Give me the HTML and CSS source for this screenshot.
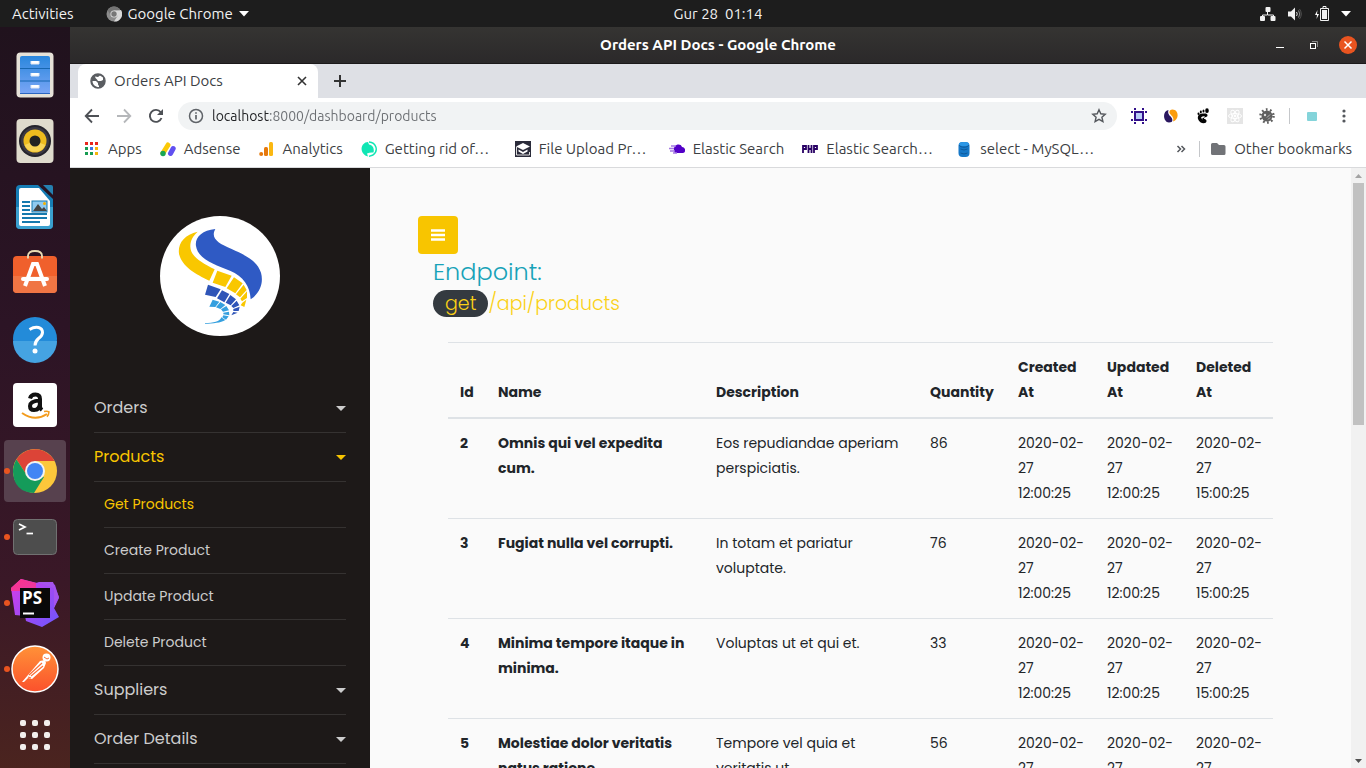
FILE: index.html
```html
<!DOCTYPE html>
<html lang="en">
<head>
<meta charset="utf-8">
<meta name="viewport" content="width=device-width, initial-scale=1">
<title>Orders API Docs</title>
<link rel="stylesheet" href="styles.css">
</head>
<body>
<header class="topbar">
  <div class="topbar-left">
    <button class="topbar-btn">Activities</button>
    <button class="topbar-btn app-menu">
      <svg width="16" height="16" viewBox="0 0 16 16"><circle cx="8" cy="8" r="7.5" fill="#8c8c8c"/><path d="M8 4h7a7.5 7.5 0 0 1-7 11.500L11.500 10z" fill="#d8d8d8"/><path d="M1.500 4.300A7.500 7.500 0 0 1 14.500 4.300L8 4.500 4.500 9z" fill="#747474"/><circle cx="8" cy="8" r="3.600" fill="#ddd"/><circle cx="8" cy="8" r="2.700" fill="#777"/></svg>
      <span>Google Chrome</span>
      <svg width="10" height="6" viewBox="0 0 10 6"><path d="M0 0h10L5 5.500z" fill="#fff"/></svg>
    </button>
  </div>
  <button class="topbar-btn clock">Gur 28&nbsp; 01:14</button>
  <div class="topbar-right">
    <svg width="16" height="14" viewBox="0 0 16 14" fill="#f2f2f2"><rect x="5.500" y="0" width="5" height="5" rx="1"/><path d="M7.500 5v3H2.500v2M8 8h5.500v2" fill="none" stroke="#f2f2f2"/><rect x="0" y="9" width="5" height="5" rx="1"/><rect x="10.500" y="9" width="5" height="5" rx="1"/></svg>
    <svg width="16" height="14" viewBox="0 0 16 14"><path d="M1 4.500h3l4-4v13l-4-4H1z" fill="#f2f2f2"/><path d="M9.500 5q1.500 2 0 4" fill="none" stroke="#ddd"/><path d="M11.500 3.500q2.500 3.500 0 7" fill="none" stroke="#888"/><path d="M12.500 2q3.500 5 0 10" fill="none" stroke="#555"/></svg>
    <svg width="16" height="16" viewBox="0 0 16 16"><path d="M3.500 4L1 9h2l-.500 4L5 8H3z" fill="#fff"/><path d="M6.500 2.500h8v12h-8zM9 2V.500h3V2" fill="none" stroke="#f2f2f2"/><rect x="8" y="4" width="5" height="9" fill="#f2f2f2"/></svg>
    <svg width="10" height="6" viewBox="0 0 10 6"><path d="M0 0h10L5 5.500z" fill="#fff"/></svg>
  </div>
</header>
<div class="desktop">
  <nav class="dock" aria-label="Dock">
    <button class="dock-item" aria-label="Files"><svg viewBox="0 0 48 48"><defs><linearGradient id="fl" x2="0" y2="1"><stop offset="0" stop-color="#2a87dd"/><stop offset="1" stop-color="#7ba6f6"/></linearGradient></defs><rect x="5.500" y="1.500" width="37" height="45" rx="4" fill="#e6e2d8"/><rect x="9" y="5" width="30" height="38" rx="2" fill="url(#fl)"/><path d="M9 17.500h30M9 30h30" stroke="#1767b0"/><path d="M9 42.500h30" stroke="#2a65c0"/><path d="M20 10v3h8v-3M20 22v3h8v-3M20 34v3h8v-3" fill="#fff" stroke="#dfe7f4"/></svg></button>
    <button class="dock-item" aria-label="Rhythmbox"><svg viewBox="0 0 48 48"><rect x="5.500" y="2" width="37" height="44" rx="4" fill="#dfdbcd"/><circle cx="24" cy="24" r="16" fill="#24232b"/><circle cx="24" cy="24" r="14" fill="#3a3842"/><circle cx="24" cy="24" r="11.500" fill="#edbb1e"/><path d="M13.500 28a11.500 11.500 0 0 0 21 0L24 24z" fill="#f8d456"/><circle cx="24" cy="24" r="5.500" fill="#222"/></svg></button>
    <button class="dock-item" aria-label="LibreOffice Writer"><svg viewBox="0 0 48 48"><path d="M9 2h18l15 14v26a4 4 0 0 1-4 4H9a4 4 0 0 1-4-4V6a4 4 0 0 1 4-4z" fill="#167db5"/><path d="M5 24h37v18a4 4 0 0 1-4 4H9a4 4 0 0 1-4-4z" fill="#3aa0cf"/><path d="M10 5h18l11 13v23a2 2 0 0 1-2 2H10a2 2 0 0 1-2-2V7a2 2 0 0 1 2-2z" fill="#fff"/><path d="M32 2h8a2 2 0 0 1 2 2v8z" fill="#2581b1"/><path d="M11 19h8M11 23h8M11 27h8M11 31h25M11 35h25M11 39h18" stroke="#1679ad" stroke-width="2"/><rect x="21" y="18" width="15" height="11" fill="#8fcaf0" stroke="#1679ad"/><path d="M22 28l5-7 4 5 2-2 3 4z" fill="#444"/><circle cx="33.500" cy="20.500" r="1.500" fill="#f4b000"/></svg></button>
    <button class="dock-item" aria-label="Ubuntu Software"><svg viewBox="0 0 48 48"><rect x="2" y="7" width="44" height="37" rx="4" fill="#f0602c"/><path d="M2 27h44v13a4 4 0 0 1-4 4H6a4 4 0 0 1-4-4z" fill="#f07544"/><path d="M14 37l8-22h4l8 22" fill="none" stroke="#fff" stroke-width="4"/><rect x="10" y="28" width="28" height="4" rx="2" fill="#fff"/><path d="M17 9.500V7q0-5 7-5t7 5v2.500" fill="none" stroke="#e9dcb4" stroke-width="1.800"/></svg></button>
    <button class="dock-item" aria-label="Help"><svg viewBox="0 0 48 48"><circle cx="24" cy="24" r="22" fill="#238bd9"/><path d="M2 26a22 22 0 0 0 44 0z" fill="#45a3e2"/><path d="M18.500 14.500q5-3 9-2 4 1.200 4 5 0 3-4 6-3.500 3-3.500 7" fill="none" stroke="#fff" stroke-width="3"/><circle cx="24" cy="36" r="2.500" fill="#fff"/></svg></button>
    <button class="dock-item" aria-label="Amazon"><svg viewBox="0 0 48 48"><rect x="2" y="2" width="44" height="44" rx="4" fill="#fff"/><path d="M19 17.500q1-4 5.500-4 4.500 0 4.500 4.500v7.500q0 2 2 3.500M29 19.500q-10 .500-10 5.500 0 4 4 4 6 0 6-8" fill="none" stroke="#111" stroke-width="4"/><path d="M11 32q13 9 25 1" fill="none" stroke="#f29b1d" stroke-width="2"/><path d="M33 30.500q3-.800 5 .300 0 2.500-2 5" fill="none" stroke="#f29b1d" stroke-width="1.500"/></svg></button>
    <button class="dock-item active" aria-label="Google Chrome"><svg viewBox="0 0 48 48"><circle cx="24" cy="24" r="22" fill="#fcc73b"/><path d="M5.500 12.500A22 22 0 0 1 43.500 14H24l-9 13z" fill="#dc4437"/><path d="M5.500 12.500A22 22 0 0 0 2 25q1 20 21 21l10-16-18-3z" fill="#149b5a"/><circle cx="24" cy="24" r="10" fill="#f3f3f3"/><circle cx="24" cy="24" r="8" fill="#4285f4"/></svg></button>
    <button class="dock-item running" aria-label="Terminal"><svg viewBox="0 0 48 48"><rect x="2.500" y="6.500" width="43" height="35" rx="4" fill="#4d4d4d" stroke="#717171"/><path d="M8 11l6 3-6 3" fill="none" stroke="#fff" stroke-width="1.700"/><path d="M15.500 20.500H22" stroke="#fff" stroke-width="1.700"/></svg></button>
    <button class="dock-item running" aria-label="PhpStorm"><svg viewBox="0 0 48 48"><defs><linearGradient id="ps" y2="1"><stop offset="0" stop-color="#d83ce8"/><stop offset="1" stop-color="#6b57ff"/></linearGradient><linearGradient id="pk" x2="1" y2="1"><stop offset="0" stop-color="#ff318c"/><stop offset="1" stop-color="#e83aa3"/></linearGradient></defs><path d="M0 9L10 0l16 4 14-1 4 3 4 13-5 10 5 9-17 10-16-6-1-5-10-1z" fill="url(#ps)"/><path d="M0 9L10 0l15 4 0 8H0z" fill="url(#pk)"/><path d="M25 3h17l6 15-5 11V9z" fill="#a653ed"/><rect x="9" y="9" width="30" height="30" fill="#090909"/><text x="11" y="25" class="ps-text">PS</text><path d="M12 34.500h11" stroke="#fff" stroke-width="2"/></svg></button>
    <button class="dock-item running" aria-label="Postman"><svg viewBox="0 0 48 48"><defs><linearGradient id="pm" x2="0" y2="1"><stop offset="0" stop-color="#ff9238"/><stop offset="1" stop-color="#fb512c"/></linearGradient></defs><circle cx="24" cy="24" r="23" fill="url(#pm)" stroke="#fff" stroke-width="1.500"/><path d="M11 37l6-7L29 16l5-1 1 3-2 5-12 11-4-1-4 4z" fill="#fff"/><path d="M18 30L31 18M20 31L32 21M17 32l3 1" stroke="#fb6f37" stroke-width="1.200"/><circle cx="35.500" cy="12.500" r="4" fill="#fff"/><path d="M33 12l3 2 2-1" fill="none" stroke="#fa713c"/></svg></button>
    <button class="dock-item" aria-label="Show Applications"><svg viewBox="0 0 48 48" fill="#f2eeec"><rect x="9" y="9" width="6" height="6" rx="2"/><rect x="21" y="9" width="6" height="6" rx="2"/><rect x="33" y="9" width="6" height="6" rx="2"/><rect x="9" y="21" width="6" height="6" rx="2"/><rect x="21" y="21" width="6" height="6" rx="2"/><rect x="33" y="21" width="6" height="6" rx="2"/><rect x="9" y="33" width="6" height="6" rx="2"/><rect x="21" y="33" width="6" height="6" rx="2"/><rect x="33" y="33" width="6" height="6" rx="2"/></svg></button>
  </nav>
  <div class="window">
    <div class="titlebar">
      <span class="window-title">Orders API Docs - Google Chrome</span>
      <div class="window-controls">
        <button aria-label="Minimize"><svg width="18" height="18" viewBox="0 0 18 18"><path d="M5 11.500h8" stroke="#fff"/></svg></button>
        <button aria-label="Restore"><svg width="18" height="18" viewBox="0 0 18 18"><path d="M7 5.500h5.500V11" fill="none" stroke="#888"/><rect x="5.500" y="7.500" width="5" height="5" fill="none" stroke="#fff"/></svg></button>
        <button aria-label="Close"><svg width="18" height="18" viewBox="0 0 18 18"><circle cx="9" cy="9" r="9" fill="#e95420"/><path d="M5.500 5.500l7 7M12.500 5.500l-7 7" stroke="#fff" stroke-width="1.500"/></svg></button>
      </div>
    </div>
    <div class="tabstrip">
      <div class="tab">
        <svg width="16" height="16" viewBox="0 0 16 16"><circle cx="8" cy="8" r="7" fill="#5a5d61"/><path d="M2.500 8h3.500l2 2v1.500l1 1.500v1.500l-3-1Q2.500 11.500 2.500 8zM5 3.500l3 .500 2-1.500 3 2v2.500l-2 1h-3l-1-1.500L5.500 5z" fill="#fff"/><circle cx="8" cy="8" r="7" fill="none" stroke="#5a5d61" stroke-width="1.500"/></svg>
        <span class="tab-title">Orders API Docs</span>
        <button class="icon-btn" aria-label="Close tab"><svg width="16" height="16" viewBox="0 0 16 16"><path d="M4 4l8 8M12 4l-8 8" stroke="#333" stroke-width="1.600"/></svg></button>
      </div>
      <button class="icon-btn" aria-label="New tab"><svg width="16" height="16" viewBox="0 0 16 16"><path d="M8 2v12M2 8h12" stroke="#333" stroke-width="2"/></svg></button>
    </div>
    <div class="toolbar">
      <div class="nav-buttons">
        <button class="icon-btn" aria-label="Back"><svg width="16" height="16" viewBox="0 0 16 16"><path d="M15 8H2M8 1.500L1.700 8 8 14.500" fill="none" stroke="#4e5156" stroke-width="1.800"/></svg></button>
        <button class="icon-btn" aria-label="Forward"><svg width="16" height="16" viewBox="0 0 16 16"><path d="M1 8h13M8 1.500L14.300 8 8 14.500" fill="none" stroke="#b5b7ba" stroke-width="1.800"/></svg></button>
        <button class="icon-btn" aria-label="Reload"><svg width="16" height="16" viewBox="0 0 16 16"><path d="M13.500 10A6 6 0 1 1 12.700 4.300" fill="none" stroke="#4e5156" stroke-width="1.900"/><path d="M15 1v6H9z" fill="#4e5156"/></svg></button>
      </div>
      <div class="omnibox">
        <svg width="16" height="16" viewBox="0 0 16 16"><circle cx="8" cy="8" r="6.500" fill="none" stroke="#5f6368" stroke-width="1.500"/><path d="M8 7v4.500M8 4.200v1.600" stroke="#5f6368" stroke-width="1.700"/></svg>
        <input class="url" type="text" aria-label="Address" value="localhost:8000/dashboard/products">
        <button class="icon-btn" aria-label="Bookmark"><svg width="16" height="16" viewBox="0 0 16 16"><path d="M8 1.800l1.800 4 4.400.400-3.300 3 1 4.400L8 11.300l-3.900 2.300 1-4.400-3.300-3 4.400-.400z" fill="none" stroke="#55585d" stroke-width="1.400"/></svg></button>
      </div>
      <div class="extensions">
        <button class="icon-btn" aria-label="Frame extension"><svg width="16" height="16" viewBox="0 0 16 16"><rect x="4" y="4" width="8" height="8" fill="#b9cdf7" stroke="#32108a" stroke-width="2"/><path d="M0 4h2M14 4h2M0 12h2M14 12h2M4 0v2M12 0v2M4 14v2M12 14v2" stroke="#32108a" stroke-width="2"/></svg></button>
        <button class="icon-btn" aria-label="Similar sites"><svg width="16" height="16" viewBox="0 0 16 16"><path d="M5.500 2C-1 3 0 14 6 14.500q4.500 0 3-4C8 8 4 7 5.500 2z" fill="#2a175f"/><path d="M10 13.500C16.500 12 16 1.500 9.500 1.500Q6 1.500 6.500 5C8 8 11.500 8.500 10 13.500z" fill="#fb9d0e"/></svg></button>
        <button class="icon-btn" aria-label="GNOME Shell integration"><svg width="16" height="16" viewBox="0 0 16 16"><path d="M9.500 5.500C5 5 2 7 3 11c1.500 5 8.500 5.500 8.500 2 0-2-3-1.500-2.500-3 .500-1 3.500-1 3.500-2.500s-1-2-3-2z" fill="#050505"/><path d="M6 9.500q2-2 4-1-.500 1-2 1.500t-.500 2z" fill="#fff"/><ellipse cx="12" cy="2.700" rx="1.800" ry="2.400"/><ellipse cx="8.500" cy="3" rx="1" ry="1.600"/><ellipse cx="5.800" cy="4" rx="1" ry="1.400"/><ellipse cx="3.500" cy="5.700" rx="1" ry="1.200"/></svg></button>
        <button class="icon-btn" aria-label="React tools"><svg width="16" height="16" viewBox="0 0 16 16"><path d="M0 0h16v16H0z" fill="#e5e5e5"/><g fill="none" stroke="#fff"><ellipse cx="8" cy="8" rx="6.500" ry="2.500"/><ellipse cx="8" cy="8" rx="6.500" ry="2.500" transform="rotate(60 8 8)"/><ellipse cx="8" cy="8" rx="6.500" ry="2.500" transform="rotate(120 8 8)"/></g><circle cx="8" cy="8" r="1.400" fill="#fff"/></svg></button>
        <button class="icon-btn" aria-label="Bug tool"><svg width="16" height="16" viewBox="0 0 16 16"><circle cx="8" cy="8" r="6.500" fill="none" stroke="#5f5f5f" stroke-width="2.500" stroke-dasharray="1.700 2.400"/><circle cx="8" cy="8" r="5.500" fill="#5f5f5f"/><circle cx="6" cy="7" r="1.200" fill="#ddd"/><path d="M8 9.500l3-3M9 11.500l2-2" stroke="#bbb"/></svg></button>
        <span class="divider"></span>
        <button class="icon-btn" aria-label="Profile"><svg width="16" height="16" viewBox="0 0 16 16"><rect x="3" y="4" width="10" height="9" rx="1" fill="#84d4da"/></svg></button>
        <button class="icon-btn" aria-label="Menu"><svg width="16" height="16" viewBox="0 0 16 16" fill="#55585d"><circle cx="8" cy="3" r="1.600"/><circle cx="8" cy="8" r="1.600"/><circle cx="8" cy="13" r="1.600"/></svg></button>
      </div>
    </div>
    <nav class="bookmarks" aria-label="Bookmarks">
      <a class="bookmark" href="#"><svg width="16" height="16" viewBox="0 0 16 16"><path d="M1 1h3v3H1zM6 1h3v3H6zM11 1h3v3h-3z" fill="#e8261c"/><path d="M1 6h3v3H1z" fill="#179c52"/><path d="M6 6h3v3H6z" fill="#3c75e8"/><path d="M11 6h3v3h-3z" fill="#f5b50b"/><path d="M1 11h3v3H1zM6 11h3v3H6z" fill="#179c52"/><path d="M11 11h3v3h-3z" fill="#f5b50b"/></svg>Apps</a>
      <a class="bookmark" href="#"><svg width="16" height="16" viewBox="0 0 16 16" fill="none" stroke-linecap="round"><path d="M8 4L3 12" stroke="#fbc908" stroke-width="5"/><circle cx="3" cy="12.500" r="2.700" fill="#18a655"/><path d="M13.200 7.500L10.500 12.500" stroke="#6150f0" stroke-width="5"/></svg>Adsense</a>
      <a class="bookmark" href="#"><svg width="16" height="16" viewBox="0 0 16 16"><rect x="11" y="1" width="4" height="14" rx="1.500" fill="#fbb811"/><rect x="6" y="6" width="4" height="9" rx="1.500" fill="#e6790c"/><circle cx="3.200" cy="13" r="2" fill="#e6790c"/></svg>Analytics</a>
      <a class="bookmark clipped" href="#"><svg width="16" height="16" viewBox="0 0 16 16"><path d="M2.500 3C-1.500 7 1 14 7 15.500l-1-3q3-1.500 6.500-1C13.500 8 12 4 8 3.500L7 1Q4 1 2.500 3z" fill="#10e6b4"/><path d="M8 1C15 1.500 18 9.500 12 14l-4 1.300" fill="none" stroke="#10e6b4" stroke-width="1.400"/></svg>Getting rid of…</a>
      <a class="bookmark clipped" href="#"><svg width="16" height="16" viewBox="0 0 16 16"><path d="M0 0h16v16H0z" fill="#2a2b3a"/><path d="M1 5.500L8 2l7 3.500L8 9zM3.500 8.500L8 11l4.500-2.500v2L8 13l-4.500-2.500z" fill="#fff"/><path d="M1.500 6v8h13V11" fill="none" stroke="#ddd"/></svg>File Upload Pr…</a>
      <a class="bookmark" href="#"><svg width="16" height="16" viewBox="0 0 16 16"><path d="M5 8c0-5 7-6 8-2 4 0 4 6 1 6H8Q4 12 5 8z" fill="#5200c7"/><path d="M2 5h5M0 7.500h5M1 10h5M4 12h4" stroke="#a377e4" stroke-width="1.300"/></svg>Elastic Search</a>
      <a class="bookmark clipped" href="#"><svg width="16" height="16" viewBox="0 0 16 16" fill="none" stroke="#280064" stroke-width="1.800"><path d="M1 12V5h3v3H1M6.500 4v8M6.500 8h3M9.500 4v8M12 12V5h3v3h-3"/></svg>Elastic Search…</a>
      <a class="bookmark clipped" href="#"><svg width="16" height="16" viewBox="0 0 16 16"><rect x="2.500" y="1" width="11" height="15" rx="4" fill="#1678c8"/><path d="M3 4c2 3 8 3 10 0M4.500 8q3.500 2 7 0M4.500 12q3.500 2 7 0" fill="none" stroke="#0f5a9b"/><ellipse cx="8" cy="3" rx="5" ry="2" fill="#2c97e6"/></svg>select - MySQL…</a>
      <div class="bookmarks-end">
        <button class="icon-btn" aria-label="More bookmarks"><svg width="16" height="16" viewBox="0 0 16 16"><path d="M4.500 5l3 3-3 3M8.500 5l3 3-3 3" fill="none" stroke="#55585d" stroke-width="1.500"/></svg></button>
        <span class="divider"></span>
        <a class="bookmark" href="#"><svg width="16" height="16" viewBox="0 0 16 16"><path d="M2.500 2H7l2 2h5a1.500 1.500 0 0 1 1.500 1.500v7A1.500 1.500 0 0 1 14 14H2.500A1.500 1.500 0 0 1 1 12.500v-9A1.500 1.500 0 0 1 2.500 2z" fill="#717377"/></svg>Other bookmarks</a>
      </div>
    </nav>
    <div class="page">
      <aside class="sidebar">
        <svg class="logo" viewBox="30 30 360 360" role="img" aria-label="Logo"><circle cx="210" cy="210" r="180" fill="#fff"/>
          <path d="M196 69C155 73 134 95 138 120C144 160 195 176 240 194C280 211 300 240 302 280C331 260 341 230 333 200C321 163 282 146 245 129C203 112 181 96 196 69Z" fill="#2f5ac4"/>
          <path d="M143 77C102 86 83 113 87 143C95 181 137 205 178 224L194 190C150 168 120 149 121 120C122 103 128 91 143 77Z" fill="#f9c700"/>
          <path d="M202 194L245 209L226 243L188 230ZM252 214L278 232L256 262L230 247ZM281 236L290 252L270 274L258 265ZM291 256V276L276 286L271 278ZM289 281L283 303L272 298L277 290Z" fill="#f9c700"/>
          <path d="M174 236L212 250L197 273L165 266ZM216 253L238 264L223 289L201 277ZM241 267L258 280L242 298L227 290ZM260 284L268 298L250 306L244 300ZM269 302L266 315L250 315V309ZM263 320L244 328L250 318Z" fill="#2f55b8"/>
          <path d="M188 281L208 287L196 303L178 302ZM211 288L226 297L211 309L198 304ZM229 300L237 313L219 317L213 310ZM237 317L238 328L220 325V320ZM236 331L228 341L217 334L220 328ZM165 352C190 350 210 348 214 334L226 342C212 351 190 352 165 354Z" fill="#35a0df"/></svg>
        <ul class="menu">
          <li><a class="menu-link" href="#">Orders <span class="caret"></span></a></li>
          <li><a class="menu-link current" href="#">Products <span class="caret"></span></a>
            <ul class="submenu">
              <li><a class="current" href="#">Get Products</a></li>
              <li><a href="#">Create Product</a></li>
              <li><a href="#">Update Product</a></li>
              <li><a href="#">Delete Product</a></li>
            </ul>
          </li>
          <li><a class="menu-link" href="#">Suppliers <span class="caret"></span></a></li>
          <li><a class="menu-link" href="#">Order Details <span class="caret"></span></a></li>
        </ul>
      </aside>
      <main class="content">
        <button class="menu-toggle" aria-label="Toggle menu"><svg width="14" height="12" viewBox="0 0 14 12"><path d="M0 1.500h14M0 6h14M0 10.500h14" stroke="#fff" stroke-width="2.600"/></svg></button>
        <div class="endpoint">
          <h2>Endpoint:</h2>
          <p><span class="method">get</span>/api/products</p>
        </div>
        <table class="products">
          <colgroup><col class="col-id"><col class="col-name"><col class="col-description"><col class="col-quantity"><col class="col-date"><col class="col-date"><col class="col-date"></colgroup>
          <thead><tr><th>Id</th><th>Name</th><th>Description</th><th>Quantity</th><th>Created<br>At</th><th>Updated<br>At</th><th>Deleted<br>At</th></tr></thead>
          <tbody>
            <tr><th>2</th><th>Omnis qui vel expedita cum.</th><td>Eos repudiandae aperiam perspiciatis.</td><td>86</td><td class="date">2020-02-<br>27<br>12:00:25</td><td class="date">2020-02-<br>27<br>12:00:25</td><td class="date">2020-02-<br>27<br>15:00:25</td></tr>
            <tr><th>3</th><th>Fugiat nulla vel corrupti.</th><td>In totam et pariatur voluptate.</td><td>76</td><td class="date">2020-02-<br>27<br>12:00:25</td><td class="date">2020-02-<br>27<br>12:00:25</td><td class="date">2020-02-<br>27<br>15:00:25</td></tr>
            <tr><th>4</th><th>Minima tempore itaque in minima.</th><td>Voluptas ut et qui et.</td><td>33</td><td class="date">2020-02-<br>27<br>12:00:25</td><td class="date">2020-02-<br>27<br>12:00:25</td><td class="date">2020-02-<br>27<br>15:00:25</td></tr>
            <tr><th>5</th><th>Molestiae dolor veritatis natus ratione.</th><td>Tempore vel quia et veritatis ut.</td><td>56</td><td class="date">2020-02-<br>27</td><td class="date">2020-02-<br>27</td><td class="date">2020-02-<br>27</td></tr>
          </tbody>
        </table>
      </main>
      <div class="scrollbar" aria-hidden="true">
        <svg width="15" height="15" viewBox="0 0 15 15"><path d="M4 10h7L7.500 6z" fill="#a3a3a3"/></svg>
        <span class="thumb"></span>
        <svg class="scroll-down" width="15" height="15" viewBox="0 0 15 15"><path d="M4 6h7l-3.500 4z" fill="#505050"/></svg>
      </div>
    </div>
  </div>
</div>
</body>
</html>
```
FILE: styles.css
```css
* { box-sizing: border-box; }
body {
  margin: 0;
  height: 100vh;
  display: flex;
  flex-direction: column;
  overflow: hidden;
  font: 15px/20px Ubuntu, "Noto Sans", sans-serif;
}
svg { display: block; flex: none; }
a { color: inherit; text-decoration: none; }
button { padding: 0; border: 0; background: none; color: inherit; font: inherit; cursor: pointer; }
ul { list-style: none; margin: 0; padding: 0; }

.topbar {
  flex: none;
  height: 27px;
  display: grid;
  grid-template-columns: 1fr auto 1fr;
  align-items: center;
  background: #1d1d1d;
  color: #f2f2f2;
}
.topbar-left, .topbar-right, .app-menu { display: flex; align-items: center; }
.topbar-left { padding-left: 12px; gap: 32px; }
.app-menu { gap: 6px; }
.clock { margin-left: 70px; }
.topbar-right { justify-content: flex-end; gap: 11px; padding-right: 15px; }

.desktop { flex: 1; min-height: 0; display: flex; }
.dock {
  flex: none;
  width: 70px;
  padding-top: 15px;
  background: linear-gradient(#20121d, #2c1425 40%, #3a1827 75%, #4b241f);
}
.dock-item {
  position: relative;
  display: flex;
  align-items: center;
  justify-content: center;
  width: 62px;
  height: 62px;
  margin: 2px 4px 4px;
  border-radius: 4px;
}
.dock-item svg { width: 48px; height: 48px; }
.dock-item.active { background: #57414e; }
.dock-item.active::before, .dock-item.running::before {
  content: "";
  position: absolute;
  left: 0;
  top: 28px;
  width: 6px;
  height: 6px;
  border-radius: 50%;
  background: #e95420;
}
.ps-text { font: bold 17px "Open Sans", sans-serif; fill: #fff; }

.window { flex: 1; min-width: 0; display: flex; flex-direction: column; background: #fff; color: #3c4043; }
.titlebar {
  flex: none;
  height: 37px;
  display: grid;
  grid-template-columns: 1fr auto 1fr;
  align-items: center;
  background: linear-gradient(#353432, #2b292a);
  border-bottom: 1px solid #1b191a;
  color: #fff;
  font-weight: bold;
}
.window-title { grid-column: 2; }
.window-controls { display: flex; justify-content: flex-end; gap: 16px; padding-right: 9px; }

.tabstrip { flex: none; height: 34px; display: flex; align-items: center; gap: 14px; padding-left: 8px; background: #dee0e5; }
.tab {
  width: 240px;
  height: 34px;
  display: flex;
  align-items: center;
  gap: 8px;
  padding: 0 8px 0 12px;
  border-radius: 8px 8px 0 0;
  background: #fff;
}
.tab-title { flex: 1; }

.toolbar { flex: none; height: 36px; display: flex; align-items: center; padding: 0 14px; }
.nav-buttons { display: flex; gap: 16px; margin-right: 14px; }
.omnibox {
  flex: 1;
  height: 28px;
  display: flex;
  align-items: center;
  gap: 8px;
  padding: 0 10px;
  border-radius: 14px;
  background: #f1f3f4;
}
.url {
  flex: 1;
  min-width: 0;
  padding: 0;
  border: 0;
  outline: 0;
  font: inherit;
  font-size: 14px;
  color: transparent;
  background: linear-gradient(90deg, #202124 58px, #6b6e72 58px);
  -webkit-background-clip: text;
  background-clip: text;
}
.extensions { display: flex; align-items: center; gap: 16px; margin-left: 14px; }
.extensions .divider { margin: 0 -2px; }
.divider { width: 1px; height: 16px; background: #c5c7ca; }

.bookmarks {
  flex: none;
  height: 34px;
  display: flex;
  align-items: center;
  gap: 18px;
  padding: 0 14px 4px;
  border-bottom: 1px solid #d9dadc;
  white-space: nowrap;
}
.bookmark { flex: none; display: flex; align-items: center; gap: 8px; }
.bookmark.clipped { width: 136px; }
.bookmarks-end { display: flex; align-items: center; gap: 10px; margin-left: auto; }
.bookmarks .clipped + .bookmarks-end { flex: none; }

.page {
  flex: 1;
  min-height: 0;
  display: flex;
  overflow: hidden;
  background: #fafafa;
  color: #212529;
  font-family: Poppins, Inter, sans-serif;
}
.sidebar { flex: none; width: 300px; padding: 48px 24px 0; background: #1d1918; color: #ccc; }
.logo { width: 120px; height: 120px; margin: 0 auto 48px; }
.menu { font-size: 16px; line-height: 24px; }
.menu-link { display: flex; align-items: center; justify-content: space-between; height: 49px; border-bottom: 1px solid #353231; }
.submenu { padding-left: 10px; font-size: 14px; }
.submenu a { display: block; height: 46px; padding-top: 10px; border-bottom: 1px solid #353231; }
.current { color: #f8c500; }
.caret { border: 5px solid transparent; border-top-color: currentColor; border-bottom: 0; }

.content { flex: 1; min-width: 0; padding: 48px 78px 0 48px; }
.menu-toggle { display: flex; align-items: center; justify-content: center; width: 40px; height: 38px; border-radius: 4px; background: #f8c500; }
.endpoint { padding-left: 15px; margin-bottom: 25px; font-size: 19px; line-height: 27px; font-weight: 300; }
.endpoint h2 { margin: 0; color: #17a2b8; font-size: 24px; line-height: 36px; font-weight: 300; }
.endpoint p { display: flex; margin: 0; color: #fbd116; }
.method { padding: 0 12px; border-radius: 14px; background: #343a40; }

.products {
  width: calc(100% - 30px);
  margin-left: 30px;
  table-layout: fixed;
  border-spacing: 0;
  font-size: 14px;
  line-height: 25px;
}
.products th, .products td { padding: 12px; text-align: left; vertical-align: top; }
.products th { font-weight: 700; }
.products thead th { border-top: 1px solid #dee2e6; border-bottom: 2px solid #dee2e6; vertical-align: bottom; }
.products tbody tr + tr > * { border-top: 1px solid #dee2e6; }
.products .date { white-space: nowrap; }
.col-id { width: 38px; }
.col-description { width: 214px; }
.col-quantity { width: 88px; }
.col-date { width: 89px; }

.scrollbar { flex: none; width: 15px; display: flex; flex-direction: column; background: #f1f1f1; }
.thumb { height: 242px; margin: 0 2px; background: #c1c1c1; }
.scroll-down { margin-top: auto; }
```
